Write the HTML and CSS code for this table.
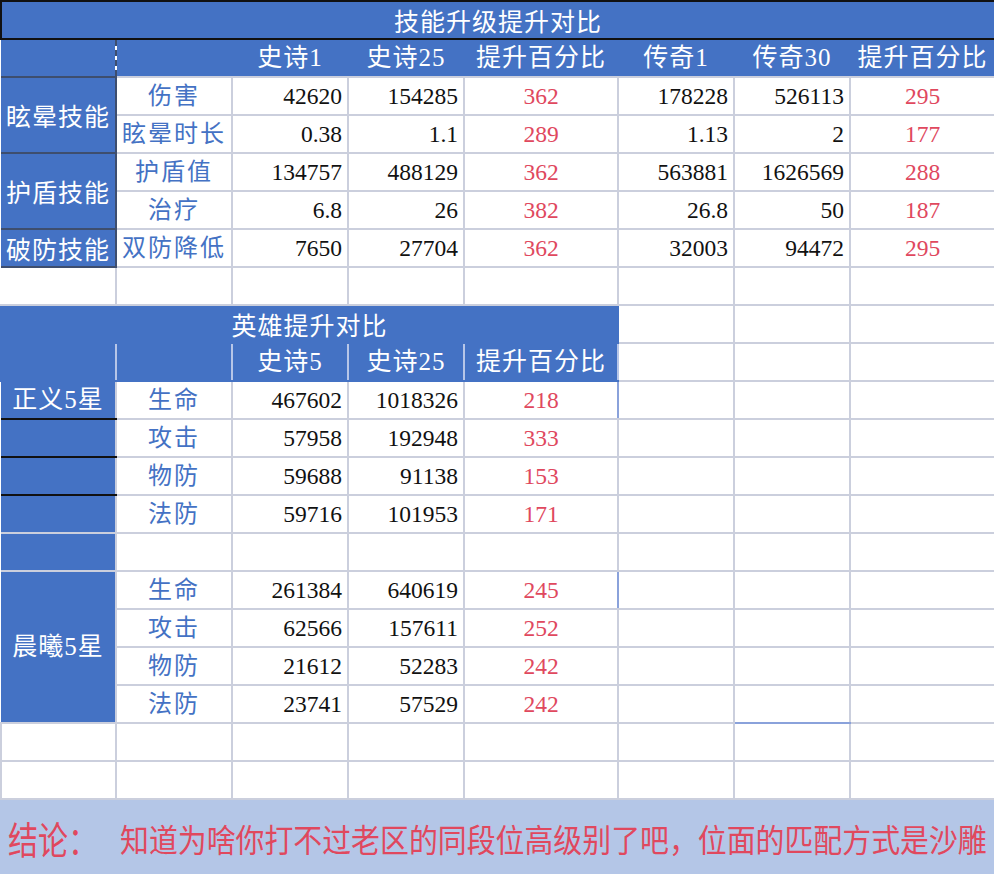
FILE: index.html
```html
<!DOCTYPE html>
<html lang="zh">
<head>
<meta charset="utf-8">
<title>技能升级提升对比</title>
<link rel="stylesheet" href="styles.css">
</head>
<body>
<div class="sheet">
<table class="grid">
  <colgroup>
    <col class="c-a"><col class="c-b"><col class="c-n"><col class="c-n"><col class="c-p"><col class="c-n"><col class="c-n"><col class="c-h">
  </colgroup>
  <tbody>
    <tr>
      <td colspan="8" class="title">技能升级提升对比</td>
    </tr>
    <tr class="hrow">
      <td class="hd hd-a"></td>
      <td class="hd"></td>
      <td class="hd">史诗1</td>
      <td class="hd">史诗25</td>
      <td class="hd">提升百分比</td>
      <td class="hd">传奇1</td>
      <td class="hd">传奇30</td>
      <td class="hd">提升百分比</td>
    </tr>
    <tr>
      <td rowspan="2" class="grp">眩晕技能</td>
      <td class="lbl">伤害</td>
      <td class="num">42620</td><td class="num">154285</td><td class="pct">362</td>
      <td class="num">178228</td><td class="num">526113</td><td class="pct">295</td>
    </tr>
    <tr>
      <td class="lbl">眩晕时长</td>
      <td class="num">0.38</td><td class="num">1.1</td><td class="pct">289</td>
      <td class="num">1.13</td><td class="num">2</td><td class="pct">177</td>
    </tr>
    <tr>
      <td rowspan="2" class="grp">护盾技能</td>
      <td class="lbl">护盾值</td>
      <td class="num">134757</td><td class="num">488129</td><td class="pct">362</td>
      <td class="num">563881</td><td class="num">1626569</td><td class="pct">288</td>
    </tr>
    <tr>
      <td class="lbl">治疗</td>
      <td class="num">6.8</td><td class="num">26</td><td class="pct">382</td>
      <td class="num">26.8</td><td class="num">50</td><td class="pct">187</td>
    </tr>
    <tr>
      <td class="grp">破防技能</td>
      <td class="lbl">双防降低</td>
      <td class="num">7650</td><td class="num">27704</td><td class="pct">362</td>
      <td class="num">32003</td><td class="num">94472</td><td class="pct">295</td>
    </tr>
    <tr>
      <td class="blank-a"></td>
      <td></td><td></td><td></td><td></td><td></td><td></td><td></td>
    </tr>
    <tr>
      <td colspan="5" class="title2">英雄提升对比</td>
      <td></td><td></td><td></td>
    </tr>
    <tr>
      <td class="hd2"></td>
      <td class="hd2"></td>
      <td class="hd2">史诗5</td>
      <td class="hd2">史诗25</td>
      <td class="hd2">提升百分比</td>
      <td></td><td></td><td></td>
    </tr>
    <tr>
      <td class="side side-cut">正义5星</td>
      <td class="lbl">生命</td>
      <td class="num">467602</td><td class="num">1018326</td><td class="pct pct-edge">218</td>
      <td></td><td></td><td></td>
    </tr>
    <tr>
      <td class="side side-cut"></td>
      <td class="lbl">攻击</td>
      <td class="num">57958</td><td class="num">192948</td><td class="pct">333</td>
      <td></td><td></td><td></td>
    </tr>
    <tr>
      <td class="side side-cut"></td>
      <td class="lbl">物防</td>
      <td class="num">59688</td><td class="num">91138</td><td class="pct">153</td>
      <td></td><td></td><td></td>
    </tr>
    <tr>
      <td class="side"></td>
      <td class="lbl">法防</td>
      <td class="num">59716</td><td class="num">101953</td><td class="pct">171</td>
      <td></td><td></td><td></td>
    </tr>
    <tr>
      <td class="side"></td>
      <td></td><td></td><td></td><td></td><td></td><td></td><td></td>
    </tr>
    <tr>
      <td rowspan="4" class="side">晨曦5星</td>
      <td class="lbl">生命</td>
      <td class="num">261384</td><td class="num">640619</td><td class="pct pct-edge">245</td>
      <td></td><td></td><td></td>
    </tr>
    <tr>
      <td class="lbl">攻击</td>
      <td class="num">62566</td><td class="num">157611</td><td class="pct">252</td>
      <td></td><td></td><td></td>
    </tr>
    <tr>
      <td class="lbl">物防</td>
      <td class="num">21612</td><td class="num">52283</td><td class="pct">242</td>
      <td></td><td></td><td></td>
    </tr>
    <tr>
      <td class="lbl">法防</td>
      <td class="num">23741</td><td class="num">57529</td><td class="pct">242</td>
      <td></td><td class="blue-bottom"></td><td></td>
    </tr>
    <tr>
      <td></td><td></td><td></td><td></td><td></td><td></td><td></td><td></td>
    </tr>
    <tr>
      <td></td><td></td><td></td><td></td><td></td><td></td><td></td><td></td>
    </tr>
  </tbody>
</table>
<div class="conclusion">
  <span class="concl-head">结论：</span>
  <span class="concl-text">知道为啥你打不过老区的同段位高级别了吧，位面的匹配方式是沙雕</span>
</div>
</div>
</body>
</html>
```

FILE: styles.css
```css
html, body {
  margin: 0;
  padding: 0;
  background: #ffffff;
}

.sheet {
  width: 994px;
  font-family: "Liberation Serif", "Noto Sans CJK SC", serif;
}

.grid {
  width: 994px;
  border-collapse: collapse;
  table-layout: fixed;
}

.c-a { width: 115px; }
.c-b { width: 116px; }
.c-n { width: 116px; }
.c-p { width: 154px; }
.c-h { width: 145px; }

.grid tr {
  height: 38px;
}

.grid td {
  border: 2px solid #cbcfdd;
  padding: 0;
  height: 34px;
  font-size: 23.5px;
  line-height: 34px;
  color: #111111;
  white-space: nowrap;
  overflow: hidden;
}

.grid td.title {
  background: #4472c4;
  color: #ffffff;
  text-align: center;
  font-size: 25px;
  border: 2px solid #111111;
  font-family: "Noto Sans CJK SC", sans-serif;
  letter-spacing: 1px;
}

.grid td.hd {
  background: #4472c4;
  color: #ffffff;
  text-align: center;
  font-size: 25px;
  border-left: 0;
  border-right: 0;
  border-top: 2px solid #111111;
  border-bottom: 2px solid #cbcfdd;
  letter-spacing: 1px;
}

.grid td.hd-a {
  border-right: 2px dashed #3e4e6e;
  border-bottom: 2px solid #3e4e6e;
}

.grid td.grp {
  background: #4472c4;
  color: #ffffff;
  text-align: center;
  font-size: 25px;
  letter-spacing: 1px;
  font-family: "Noto Sans CJK SC", sans-serif;
  border: 2px solid #3e4e6e;
  border-left: 0;
}

.grid td.lbl {
  color: #4472c4;
  text-align: center;
  font-size: 24px;
  letter-spacing: 2px;
}

.grid td.num {
  text-align: right;
  padding-right: 5px;
}

.grid td.pct {
  text-align: center;
  color: #e0485e;
}

.grid td.pct-edge {
  border-right-color: #8aa2db;
}

.grid td.blank-a {
  border-left: 0;
  border-top-color: #3e4e6e;
}

.grid td.title2 {
  background: #4472c4;
  color: #ffffff;
  font-size: 25px;
  text-align: center;
  border-color: #4472c4;
  font-family: "Noto Sans CJK SC", sans-serif;
  letter-spacing: 1px;
}

.grid td.hd2 {
  background: #4472c4;
  color: #ffffff;
  text-align: center;
  font-size: 25px;
  border-top-color: #4472c4;
  border-bottom-color: #4472c4;
  border-left-color: #b7c6e8;
  border-right-color: #b7c6e8;
  letter-spacing: 1px;
}

.grid td.hd2:first-child {
  border-left-color: #4472c4;
}

.grid td.side {
  background: #4472c4;
  color: #ffffff;
  text-align: center;
  font-size: 25px;
  letter-spacing: 1px;
  border-left: 0;
  border-top-color: #4472c4;
  border-bottom-color: #cbcfdd;
}

.grid td.side-cut {
  border-bottom: 2px solid #111111;
}

.grid td.blue-bottom {
  border-bottom-color: #8aa2db;
}

.conclusion {
  height: 76px;
  background: #b4c6e7;
  display: flex;
  align-items: center;
  padding-left: 8px;
  color: #e0485e;
  font-family: "Noto Sans CJK SC", sans-serif;
}

.concl-head {
  display: inline-block;
  width: 112px;
  font-size: 30px;
  transform: scaleY(1.25);
  transform-origin: center;
}

.concl-text {
  display: inline-block;
  font-size: 28.9px;
  transform: scaleY(1.1);
  white-space: nowrap;
}
```
